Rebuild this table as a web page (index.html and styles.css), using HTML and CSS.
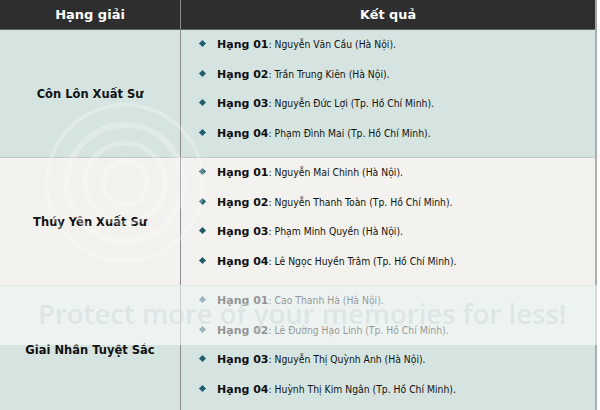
FILE: index.html
```html
<!DOCTYPE html>
<html lang="vi">
<head>
<meta charset="utf-8">
<title>Kết quả</title>
<link rel="stylesheet" href="styles.css">
</head>
<body>
<div class="wrap">
  <table class="results">
    <thead>
      <tr><th class="c-award">Hạng giải</th><th class="c-result">Kết quả</th></tr>
    </thead>
    <tbody>
      <tr class="r-teal">
        <td class="award">Côn Lôn Xuất Sư</td>
        <td class="result">
          <ul class="list">
            <li><b>Hạng 01</b>: Nguyễn Văn Cầu (Hà Nội).</li>
            <li><b>Hạng 02</b>: Trần Trung Kiên (Hà Nội).</li>
            <li><b>Hạng 03</b>: Nguyễn Đức Lợi (Tp. Hồ Chí Minh).</li>
            <li><b>Hạng 04</b>: Phạm Đình Mai (Tp. Hồ Chí Minh).</li>
          </ul>
        </td>
      </tr>
      <tr class="r-cream">
        <td class="award">Thúy Yên Xuất Sư</td>
        <td class="result">
          <ul class="list">
            <li><b>Hạng 01</b>: Nguyễn Mai Chinh (Hà Nội).</li>
            <li><b>Hạng 02</b>: Nguyễn Thanh Toàn (Tp. Hồ Chí Minh).</li>
            <li><b>Hạng 03</b>: Phạm Minh Quyền (Hà Nội).</li>
            <li><b>Hạng 04</b>: Lê Ngọc Huyền Trâm (Tp. Hồ Chí Minh).</li>
          </ul>
        </td>
      </tr>
      <tr class="r-teal">
        <td class="award">Giai Nhân Tuyệt Sắc</td>
        <td class="result">
          <ul class="list">
            <li><b>Hạng 01</b>: Cao Thanh Hà (Hà Nội).</li>
            <li><b>Hạng 02</b>: Lê Đường Hạo Linh (Tp. Hồ Chí Minh).</li>
            <li><b>Hạng 03</b>: Nguyễn Thị Quỳnh Anh (Hà Nội).</li>
            <li><b>Hạng 04</b>: Huỳnh Thị Kim Ngân (Tp. Hồ Chí Minh).</li>
          </ul>
        </td>
      </tr>
    </tbody>
  </table>
  <svg class="rings" width="260" height="200" viewBox="0 0 260 200" aria-hidden="true">
    <g fill="none" stroke="#ffffff">
      <circle cx="125" cy="95" r="22" stroke-width="5"/>
      <circle cx="125" cy="95" r="40" stroke-width="5"/>
      <circle cx="125" cy="95" r="58" stroke-width="6"/>
      <circle cx="125" cy="95" r="78" stroke-width="4"/>
    </g>
  </svg>
  <div class="watermark">Protect more of your memories for less!</div>
</div>
</body>
</html>
```
FILE: styles.css
```css
html, body {
  margin: 0;
  padding: 0;
  background: #ffffff;
}
.wrap {
  position: relative;
  width: 600px;
  height: 410px;
  overflow: hidden;
  font-family: "DejaVu Sans", Verdana, sans-serif;
  font-size: 11px;
  color: #111;
}
.results {
  border-collapse: collapse;
  width: 597px;
  table-layout: fixed;
}
.results th {
  background: #2e2e2e;
  color: #fff;
  font-weight: bold;
  height: 29px;
  padding: 0;
  text-align: center;
  border-bottom: 1px solid #5c6664;
  border-right: 1px solid #8a8a8a;
}
.results th.c-award { width: 180px; font-size: 13px; }
.results th.c-result { border-right: 2px solid #a0a6a5; font-size: 12.8px; }
.results td {
  padding: 0;
  height: 127px;
  border-bottom: 1px solid #c3cbca;
}
.results td.award {
  vertical-align: middle;
  text-align: center;
  font-weight: bold;
  font-size: 11.5px;
  border-right: 1px solid #8d8d8d;
}
.results td.result {
  vertical-align: top;
  border-right: 2px solid #a9b0af;
}
.r-teal td { background: #d5e4e1; }
.r-cream td { background: #f4f2ee; }
.list {
  list-style: none;
  margin: 0;
  padding: 1px 0 0 19px;
  font-family: "DejaVu Sans Condensed", "DejaVu Sans", sans-serif;
  font-stretch: condensed;
  font-size: 10.3px;
}
.list li {
  height: 29.7px;
  line-height: 26px;
  white-space: nowrap;
}
.list li::before {
  content: "";
  display: inline-block;
  width: 5px;
  height: 5px;
  background: #1f5d6b;
  transform: rotate(45deg);
  margin-right: 12px;
  vertical-align: 2px;
}
.list b {
  color: #111;
  font-family: "DejaVu Sans", sans-serif;
  font-stretch: normal;
  font-size: 11px;
}
.rings {
  position: absolute;
  left: 0;
  top: 88px;
  opacity: 0.28;
  pointer-events: none;
}
.watermark {
  position: absolute;
  left: 0;
  top: 285px;
  width: 597px;
  height: 60px;
  background: rgba(255, 255, 255, 0.55);
  color: rgba(200, 212, 210, 0.42);
  font-family: "Open Sans", sans-serif;
  font-weight: 600;
  font-size: 27.5px;
  line-height: 58px;
  padding-left: 38px;
  box-sizing: border-box;
  white-space: nowrap;
}
```
